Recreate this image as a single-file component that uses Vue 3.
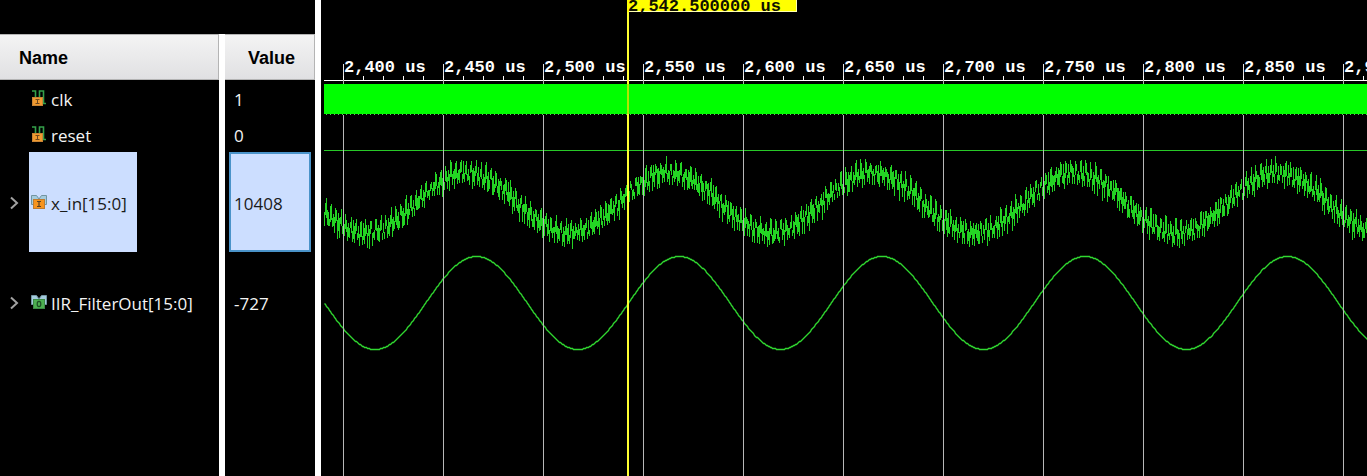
<script setup>
import { computed, onBeforeUnmount, onMounted, ref } from 'vue'

const signals = [
  { name: 'clk', value: '1', kind: 'bit' },
  { name: 'reset', value: '0', kind: 'bit' },
  { name: 'x_in[15:0]', value: '10408', kind: 'bus-in', bus: true, selected: true },
  { name: 'IIR_FilterOut[15:0]', value: '-727', kind: 'bus-out', bus: true },
]

const view = ref(null)
const width = ref(1046)
let observer

onMounted(() => {
  observer = new ResizeObserver(([entry]) => {
    width.value = Math.ceil(entry.contentRect.width)
  })
  observer.observe(view.value)
})
onBeforeUnmount(() => observer.disconnect())

const START = 3
const FIRST = 22
const PERIOD = 202.8

const majors = computed(() => {
  const out = []
  for (let x = FIRST, t = 2400; x < width.value; x += 100, t += 50) {
    out.push({ x, label: `${t.toLocaleString('en-US')} us` })
  }
  return out
})

const minorPath = computed(() => {
  let d = ''
  for (let x = FIRST; x < width.value; x += 20) d += `M${x + 0.5} 76V80`
  return d
})

const gridPath = computed(() =>
  majors.value.map(({ x }) => `M${x + 0.5} 80V84M${x + 0.5} 115V2000`).join('')
)
const majorPath = computed(() => majors.value.map(({ x }) => `M${x + 0.5} 64V80`).join(''))

const filtered = computed(() => {
  let d = ''
  for (let x = START; x <= width.value; x++) {
    const y = 302.5 - 46.5 * Math.cos((2 * Math.PI * (x - 155)) / PERIOD)
    d += `${d ? 'L' : 'M'}${x + 0.5} ${Math.round(y) + 0.5}`
  }
  return d
})

// Repeatable noise in the range 0..1, with the same period as the sine.
const noiseAt = (i) => {
  const s = Math.sin((i % 203) * 12.9898 + 4.1) * 43758.5453
  return s - Math.floor(s)
}

const noisy = computed(() => {
  let d = ''
  for (let x = START; x <= width.value; x++) {
    const base = 203 - 30 * Math.cos((2 * Math.PI * (x - 145)) / PERIOD)
    // Each column is one stroke whose middle swings around the sine.
    const side = [-1, 1, 0, 1, -1][x % 5]
    const middle = base + side * 5 + 6 * (noiseAt(x) - 0.5)
    const half = 3 + 7 * noiseAt(x + 77)
    d += `M${x + 0.5} ${Math.round(middle - half)}V${Math.round(middle + half)}`
  }
  return d
})
</script>

<template>
  <main class="viewer">
    <section class="signals">
      <table>
        <thead>
          <tr>
            <th class="name-head" scope="col">Name</th>
            <th class="value-head" scope="col">Value</th>
          </tr>
        </thead>
        <tbody>
          <tr v-for="s in signals" :key="s.name" :class="{ tall: s.bus, selected: s.selected }">
            <td>
              <div class="name-cell">
                <button v-if="s.bus" class="expand" type="button" :aria-label="`Expand ${s.name}`">
                  <svg width="9" height="14" viewBox="0 0 9 14">
                    <path d="M1 1.5L7 7L1 12.5" fill="none" stroke="#a2a2a2" stroke-width="2" />
                  </svg>
                </button>
                <span v-else class="expand"></span>
                <span class="name">
                  <svg v-if="s.kind === 'bit'" class="icon" width="18" height="18" viewBox="0 -1 18 18">
                    <path d="M1 1H4.500V8M8.500 8V1H12.500V13.500H15" fill="none" stroke="#34a04a" stroke-width="1.600" />
                    <rect x="1.500" y="7.500" width="10" height="8" fill="#f09a30" stroke="#c98434" />
                    <path d="M4.500 9.500H8.500M6.500 9.500V13.500M4.500 13.500H8.500" fill="none" stroke="#70481c" />
                  </svg>
                  <svg v-else class="icon" width="18" height="18" viewBox="0 -1 18 18">
                    <path d="M0.500 1.500H5.500L8 5L10.500 1.500H15.500V10.500H0.500Z" fill="#a4cbdc" stroke="#7294a2" />
                    <template v-if="s.kind === 'bus-in'">
                      <rect x="2.500" y="5.500" width="11" height="9" fill="#f7941e" stroke="#c07c30" />
                      <path d="M6 7.500H10M8 7.500V12.500M6 12.500H10" fill="none" stroke="#5c4020" stroke-width="1.200" />
                    </template>
                    <template v-else>
                      <rect x="2.500" y="5.500" width="11" height="9" fill="#4caf50" stroke="#3b8a44" />
                      <ellipse cx="8" cy="10" rx="1.800" ry="2.600" fill="none" stroke="#1d4f25" stroke-width="1.200" />
                    </template>
                  </svg>
                  <span class="label">{{ s.name }}</span>
                </span>
              </div>
            </td>
            <td>
              <div class="value"><span class="label">{{ s.value }}</span></div>
            </td>
          </tr>
        </tbody>
        <tfoot aria-hidden="true">
          <tr><td></td><td></td></tr>
        </tfoot>
      </table>
    </section>

    <section ref="view" class="wave" aria-label="Waveforms">
      <svg width="100%" height="100%" shape-rendering="crispEdges">
        <text v-for="m in majors" :key="m.x" :x="m.x + 1" y="72" class="time">{{ m.label }}</text>
        <path :d="majorPath" stroke="#e4e4e4" />
        <path :d="minorPath" stroke="#fff" />
        <path :d="`M${START} 80.5H${width}`" stroke="#fff" />

        <rect :x="START" y="84" :width="width" height="30" fill="#00ff00" />
        <path :d="`M${START + 2} 114.5H${width}`" stroke="#5cc85c" stroke-dasharray="1 3" />
        <path :d="`M${START} 150.5H${width}`" stroke="#28c828" />
        <path :d="noisy" class="trace noise" />
        <path :d="filtered" class="trace" />
        <path :d="gridPath" stroke="#b8b8b8" />

        <rect x="306" y="0" width="2" height="100%" fill="#ffff30" />
        <rect x="306" y="84" width="2" height="30" fill="#b4e600" />
        <rect x="306" y="0" width="170" height="12" fill="#ffff00" />
        <path d="M308 11.500H475.500V0" fill="none" stroke="#ffffb0" />
        <text x="307" y="11" class="time cursor-time">2,542.500000 us</text>
      </svg>
    </section>
  </main>
</template>

<style>
body {
  background: #000;
}
</style>

<style scoped>
.viewer {
  display: flex;
  height: 100vh;
  overflow: hidden;
  background: #000;
  color: #f4f4f4;
  font: 17px/24px "Open Sans", "Noto Sans", sans-serif;
}
.signals {
  flex: none;
  padding-top: 34px;
  box-sizing: border-box;
  border-right: 6px solid #fff;
}
table {
  width: 315px;
  table-layout: fixed;
  border-collapse: separate;
  border-spacing: 0;
}
th,
td {
  box-sizing: border-box;
  padding: 0;
  text-align: left;
}
td:first-child,
th:first-child {
  border-right: 6px solid #fff;
}
th {
  height: 46px;
  padding-top: 2px;
  background: linear-gradient(#f4f4f4, #e0e0e2);
  box-shadow: inset -1px -1px #b4b4b4, inset 0 1px #b4b4b4;
  color: #000;
  font: bold 18px/24px "Liberation Sans", Arial, sans-serif;
}
.name-head {
  width: 225px;
  padding-left: 19px;
}
.value-head {
  padding-left: 23px;
}
tfoot td {
  height: calc(100vh - 352px);
}
.name-cell,
.name,
.value {
  display: flex;
  align-items: center;
  height: 36px;
  box-sizing: border-box;
}
.tall .name-cell,
.tall .name,
.tall .value {
  height: 100px;
}
.expand {
  flex: none;
  display: flex;
  justify-content: center;
  width: 29px;
  padding: 2px 0 0;
  border: 0;
  background: none;
}
.name {
  padding: 0 10px 0 2px;
}
.icon {
  flex: none;
  margin-right: 2px;
}
.label {
  padding-top: 3px;
  white-space: nowrap;
}
.value {
  margin: 0 4px;
  padding-left: 3px;
  border: 2px solid transparent;
}
.selected .name,
.selected .value {
  background: #ccdeff;
  color: #1a1a1a;
}
.selected .value {
  border-color: #4a93c9;
}
.wave {
  flex: 1;
  min-width: 0;
}
.wave svg {
  display: block;
}
.time {
  fill: #fff;
  font: bold 17px "Liberation Mono", "Courier New", monospace;
}
.cursor-time {
  fill: #101000;
}
.trace {
  fill: none;
  stroke: #30d830;
  stroke-width: 1.3;
  shape-rendering: auto;
}
.noise {
  stroke: #24d424;
  stroke-width: 1;
  shape-rendering: crispEdges;
}
</style>
